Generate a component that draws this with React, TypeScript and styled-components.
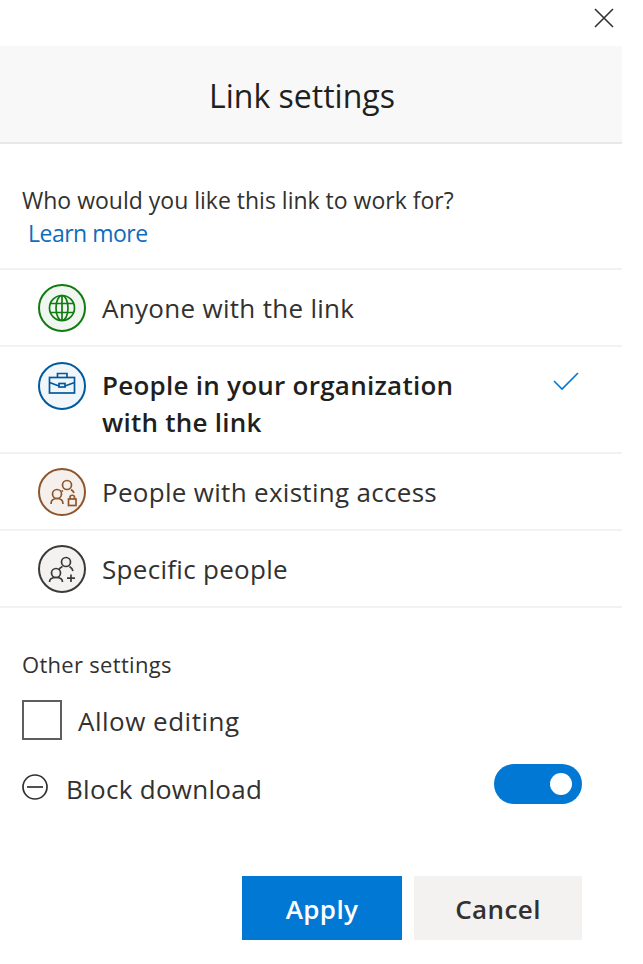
import React from "react"
import styled, { createGlobalStyle } from "styled-components"

const GlobalStyle = createGlobalStyle`
    html, body {
        margin: 0;
        padding: 0;
        background: #fff;
    }
    body {
        font-family: "Open Sans", "Noto Sans", "Liberation Sans", sans-serif;
        color: #323130;
    }
`

const Panel = styled.div`
    width: 622px;
    height: 964px;
    display: flex;
    flex-direction: column;
`

const CloseBar = styled.div`
    height: 46px;
    display: flex;
    justify-content: flex-end;
    align-items: flex-start;
    padding: 8px 8px 0 0;
    box-sizing: border-box;
`

const CloseButton = styled.button`
    width: 20px;
    height: 20px;
    padding: 0;
    border: none;
    background: none;
    display: block;
`

const Header = styled.div`
    height: 98px;
    box-sizing: border-box;
    background: #f8f8f8;
    border-bottom: 2px solid #e8e8e8;
    padding: 2px 18px 0 0;
    display: flex;
    align-items: center;
    justify-content: center;
    font-size: 32px;
    color: #201f1e;
`

const Intro = styled.div`
    padding: 40px 22px 18px;
    font-size: 23px;
    line-height: 33px;
`

const LearnMore = styled.a`
    display: block;
    margin-left: 6px;
    color: #0f6cbd;
    letter-spacing: -0.5px;
`

const OptionList = styled.div`
    display: flex;
    flex-direction: column;
    border-top: 2px solid #f3f2f1;
`

const Option = styled.div<{ $tall?: boolean }>`
    height: ${(p) => (p.$tall ? 107 : 77)}px;
    box-sizing: border-box;
    border-bottom: 2px solid #f3f2f1;
    padding: ${(p) => (p.$tall ? "15px 41px 0 38px" : "0 41px 0 38px")};
    display: flex;
    align-items: ${(p) => (p.$tall ? "flex-start" : "center")};
    gap: 16px;
`

const Badge = styled.div<{ $color: string; $fill: string }>`
    width: 48px;
    height: 48px;
    flex: none;
    box-sizing: border-box;
    border-radius: 50%;
    border: 2px solid ${(p) => p.$color};
    background: ${(p) => p.$fill};
    color: ${(p) => p.$color};
    display: flex;
    align-items: center;
    justify-content: center;
`

const OptionLabel = styled.div<{ $selected?: boolean }>`
    flex: 1;
    font-size: 26px;
    line-height: 37px;
    letter-spacing: ${(p) => (p.$selected ? 0.25 : 0.3)}px;
    padding-top: ${(p) => (p.$selected ? 5 : 2)}px;
    font-weight: ${(p) => (p.$selected ? 600 : 400)};
    color: ${(p) => (p.$selected ? "#201f1e" : "#323130")};
`

const Check = styled.svg`
    flex: none;
    margin-top: 10px;
`

const Settings = styled.div`
    padding: 41px 40px 0 22px;
    display: flex;
    flex-direction: column;
`

const SettingsTitle = styled.div`
    font-size: 22px;
    line-height: 30px;
    letter-spacing: 0.3px;
    margin-bottom: 21px;
`

const CheckRow = styled.label`
    display: flex;
    align-items: center;
    gap: 16px;
    font-size: 26px;
    letter-spacing: 0.5px;
    height: 40px;
`

const CheckBox = styled.span`
    width: 40px;
    height: 40px;
    box-sizing: border-box;
    border: 2px solid #605e5c;
    flex: none;
`

const CheckText = styled.span`
    padding-top: 2px;
`

const ToggleRow = styled.div`
    display: flex;
    align-items: center;
    margin-top: 24px;
    height: 40px;
    font-size: 26px;
    letter-spacing: 0.3px;
`

const BlockLabel = styled.div`
    flex: 1;
    display: flex;
    align-items: center;
    gap: 18px;
    padding-top: 10px;
`

const BlockIcon = styled.svg`
    flex: none;
    margin-top: -5px;
`

const Toggle = styled.div`
    width: 88px;
    height: 40px;
    border-radius: 20px;
    background: #0078d4;
    display: flex;
    align-items: center;
    justify-content: flex-end;
    padding-right: 10px;
    box-sizing: border-box;
`

const Knob = styled.span`
    width: 22px;
    height: 22px;
    border-radius: 50%;
    background: #fff;
`

const Actions = styled.div`
    display: flex;
    justify-content: flex-end;
    gap: 12px;
    margin-top: 72px;
`

const ActionButton = styled.button<{ $primary?: boolean }>`
    height: 64px;
    width: ${(p) => (p.$primary ? 160 : 168)}px;
    border: none;
    padding: 2px 0 0;
    font-family: inherit;
    font-size: 26px;
    font-weight: 600;
    letter-spacing: 0.4px;
    background: ${(p) => (p.$primary ? "#0078d4" : "#f3f2f1")};
    color: ${(p) => (p.$primary ? "#fff" : "#323130")};
`

const Glyph: React.FC<{ children: React.ReactNode }> = (props) => (
    <svg width="44" height="44" viewBox="2 2 44 44" fill="none" stroke="currentColor" strokeWidth="1.7">
        {props.children}
    </svg>
)

const GlobeIcon = () => (
    <Glyph>
        <circle cx="24" cy="24" r="12.5" />
        <ellipse cx="24" cy="24" rx="6" ry="12.5" />
        <path d="M24 11.5V36.5M13 19.5H35M13 28.5H35" />
    </Glyph>
)

const CaseIcon = () => (
    <Glyph>
        <rect x="11.5" y="15.5" width="25" height="15.5" />
        <path d="M19.5 15V11.5H29V15M11.5 20.5L21 24M36.5 20.5L27 24" />
        <rect x="21" y="21.5" width="6" height="3.5" />
    </Glyph>
)

const PeopleLockIcon = () => (
    <Glyph>
        <circle cx="29" cy="17" r="4.5" />
        <circle cx="19" cy="26" r="4.5" />
        <path d="M13 36C13 32.5 15.5 30.5 19 30.5C22.5 30.5 25 32.5 25 36" />
        <path d="M25 22.5C24.5 22.8 24 23 23.5 23.5M33 21.5C34.5 22.5 35.5 23.5 36 25" />
        <rect x="30.5" y="31" width="7.5" height="6.5" />
        <path d="M32 31V29.5C32 26.5 36.5 26.5 36.5 29.5V31" />
    </Glyph>
)

const PeopleAddIcon = () => (
    <Glyph>
        <circle cx="28" cy="17" r="4.5" />
        <circle cx="18" cy="28" r="4.5" />
        <path d="M11.5 37C11.5 33.5 14 32.5 18 32.5C22 32.5 24.5 33.5 24.5 37" />
        <path d="M24.5 21.5C22.5 22.5 21.5 23.5 21 24.5M31.5 21.5C33 22.5 34.5 24 35 26" />
        <path d="M33 29.5V37M29 33.2H37" />
    </Glyph>
)

const App: React.FC = () => {
    return (
        <Panel>
            <GlobalStyle />
            <CloseBar>
                <CloseButton>
                    <svg width="20" height="20" viewBox="0 0 20 20" stroke="#323130" strokeWidth="1.6">
                        <path d="M1 1L19 19M19 1L1 19" />
                    </svg>
                </CloseButton>
            </CloseBar>
            <Header>Link settings</Header>
            <Intro>
                Who would you like this link to work for?
                <LearnMore>Learn more</LearnMore>
            </Intro>
            <OptionList>
                <Option>
                    <Badge $color="#107c10" $fill="#f1f6f1"><GlobeIcon /></Badge>
                    <OptionLabel>Anyone with the link</OptionLabel>
                </Option>
                <Option $tall>
                    <Badge $color="#005a9e" $fill="#f1f6fa"><CaseIcon /></Badge>
                    <OptionLabel $selected>
                        People in your organization
                        <br />
                        with the link
                    </OptionLabel>
                    <Check width="28" height="20" viewBox="0 0 28 20" fill="none" stroke="#0078d4" strokeWidth="1.6">
                        <path d="M1 9L9 17L25 1" />
                    </Check>
                </Option>
                <Option>
                    <Badge $color="#8e562e" $fill="#f5f0ec"><PeopleLockIcon /></Badge>
                    <OptionLabel>People with existing access</OptionLabel>
                </Option>
                <Option>
                    <Badge $color="#3b3a39" $fill="#f3f2f1"><PeopleAddIcon /></Badge>
                    <OptionLabel>Specific people</OptionLabel>
                </Option>
            </OptionList>
            <Settings>
                <SettingsTitle>Other settings</SettingsTitle>
                <CheckRow>
                    <CheckBox />
                    <CheckText>Allow editing</CheckText>
                </CheckRow>
                <ToggleRow>
                    <BlockLabel>
                        <BlockIcon width="26" height="26" viewBox="0 0 26 26" fill="none" stroke="#323130" strokeWidth="1.7">
                            <circle cx="13" cy="13" r="12" />
                            <path d="M5 13H21" />
                        </BlockIcon>
                        Block download
                    </BlockLabel>
                    <Toggle><Knob /></Toggle>
                </ToggleRow>
                <Actions>
                    <ActionButton $primary>Apply</ActionButton>
                    <ActionButton>Cancel</ActionButton>
                </Actions>
            </Settings>
        </Panel>
    )
}

export default App
